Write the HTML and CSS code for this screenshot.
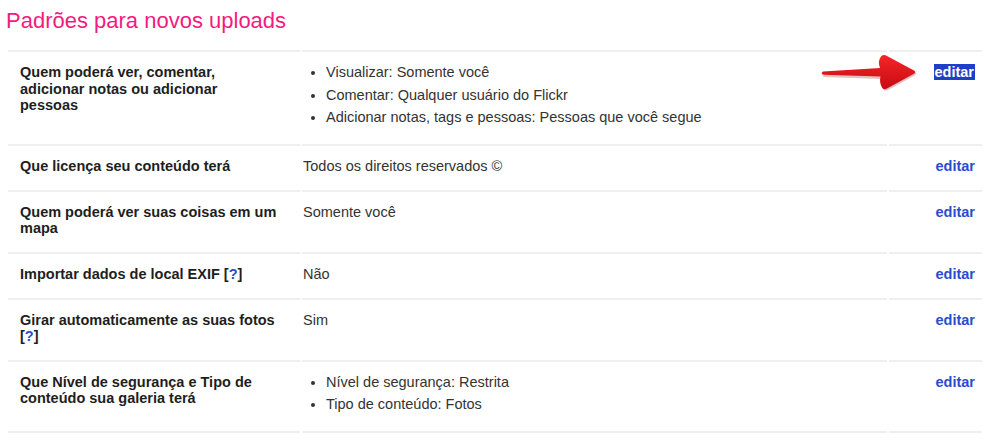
FILE: index.html
```html
<!DOCTYPE html>
<html lang="pt-BR">
<head>
<meta charset="utf-8">
<title>Padrões para novos uploads</title>
<link rel="stylesheet" href="styles.css">
</head>
<body>
<div class="page">
  <h1 class="title">Padrões para novos uploads</h1>
  <table class="prefs">
    <tr>
      <td class="label">Quem poderá ver, comentar, adicionar notas ou adicionar pessoas</td>
      <td class="value">
        <ul class="list">
          <li>Visualizar: Somente você</li>
          <li>Comentar: Qualquer usuário do Flickr</li>
          <li>Adicionar notas, tags e pessoas: Pessoas que você segue</li>
        </ul>
      </td>
      <td class="action"><a class="edit selected" href="#">editar</a></td>
    </tr>
    <tr>
      <td class="label">Que licença seu conteúdo terá</td>
      <td class="value">Todos os direitos reservados ©</td>
      <td class="action"><a class="edit" href="#">editar</a></td>
    </tr>
    <tr>
      <td class="label">Quem poderá ver suas coisas em um mapa</td>
      <td class="value">Somente você</td>
      <td class="action"><a class="edit" href="#">editar</a></td>
    </tr>
    <tr>
      <td class="label">Importar dados de local EXIF [<a class="help" href="#">?</a>]</td>
      <td class="value">Não</td>
      <td class="action"><a class="edit" href="#">editar</a></td>
    </tr>
    <tr>
      <td class="label">Girar automaticamente as suas fotos [<a class="help" href="#">?</a>]</td>
      <td class="value">Sim</td>
      <td class="action"><a class="edit" href="#">editar</a></td>
    </tr>
    <tr>
      <td class="label">Que Nível de segurança e Tipo de conteúdo sua galeria terá</td>
      <td class="value">
        <ul class="list">
          <li>Nível de segurança: Restrita</li>
          <li>Tipo de conteúdo: Fotos</li>
        </ul>
      </td>
      <td class="action"><a class="edit" href="#">editar</a></td>
    </tr>
  </table>
  <svg class="arrow" width="110" height="45" viewBox="0 0 110 45" aria-hidden="true">
    <defs>
      <linearGradient id="ag" x1="0" y1="0" x2="0" y2="1">
        <stop offset="0" stop-color="#f2262a"/>
        <stop offset="1" stop-color="#c80b10"/>
      </linearGradient>
    </defs>
    <path d="M10,23.5 L67,20 L67.5,20.5 Q64.5,11 68,6.5 Q70.5,4 74,6 L101,20.5 Q103.5,22 101,23.8 L74,38.5 Q70.5,40.5 69,37.5 Q66,32 67.5,27.5 L10,25.5 Q7.5,24.5 10,23.5 Z" fill="#8a0a0a" opacity="0.25" transform="translate(1,1.5)"/>
    <path d="M10,21.5 L67,18 Q64.5,11 68,6.5 Q70.5,4 74,6 L101,20.5 Q103.5,22 101,23.8 L74,38.5 Q70.5,40.5 69,37.5 Q66,32 67.5,26.5 L10,24.8 Q7.5,23.2 10,21.5 Z" fill="url(#ag)"/>
  </svg>
</div>
</body>
</html>
```

FILE: styles.css
```css
html, body {
  margin: 0;
  padding: 0;
  background: #ffffff;
}

body {
  font-family: "Liberation Sans", Arial, Helvetica, sans-serif;
  color: #222222;
}

.page {
  position: relative;
  padding: 0 0 0 8px;
}

.title {
  margin: 0 0 0 -2px;
  padding: 8px 0 0 0;
  font-size: 22px;
  font-weight: normal;
  line-height: 25px;
  color: #f41a80;
}

.prefs {
  margin-top: 17px;
  margin-left: -2px;
  width: 978px;
  border-collapse: separate;
  border-spacing: 2px 0;
  table-layout: fixed;
}

.prefs td {
  vertical-align: top;
  border-top: 2px solid #efefef;
  padding: 12px 0 15px 0;
  font-size: 14.5px;
  line-height: 17px;
}

.prefs tr:last-child td {
  border-bottom: 2px solid #efefef;
}

.label {
  width: 292px;
  box-sizing: border-box;
  padding-left: 12px !important;
  padding-right: 21px !important;
  font-weight: bold;
  color: #1e1e1e;
  line-height: 16.5px !important;
}

.value {
  padding-left: 1px !important;
  color: #333333;
}

.action {
  width: 93px;
  box-sizing: border-box;
  text-align: right;
  padding-right: 7px !important;
}

.edit {
  font-weight: bold;
  color: #2a4ccf;
  text-decoration: none;
}

.edit.selected {
  background: #1f3fc6;
  color: #ffffff;
  padding: 0 1px;
}

.help {
  color: #2a4ccf;
  text-decoration: none;
}

.list {
  margin: -3px 0 0 0;
  padding: 0 0 0 23px;
}

.list li {
  line-height: 22.5px;
}

.arrow {
  position: absolute;
  left: 813px;
  top: 50px;
}
```
